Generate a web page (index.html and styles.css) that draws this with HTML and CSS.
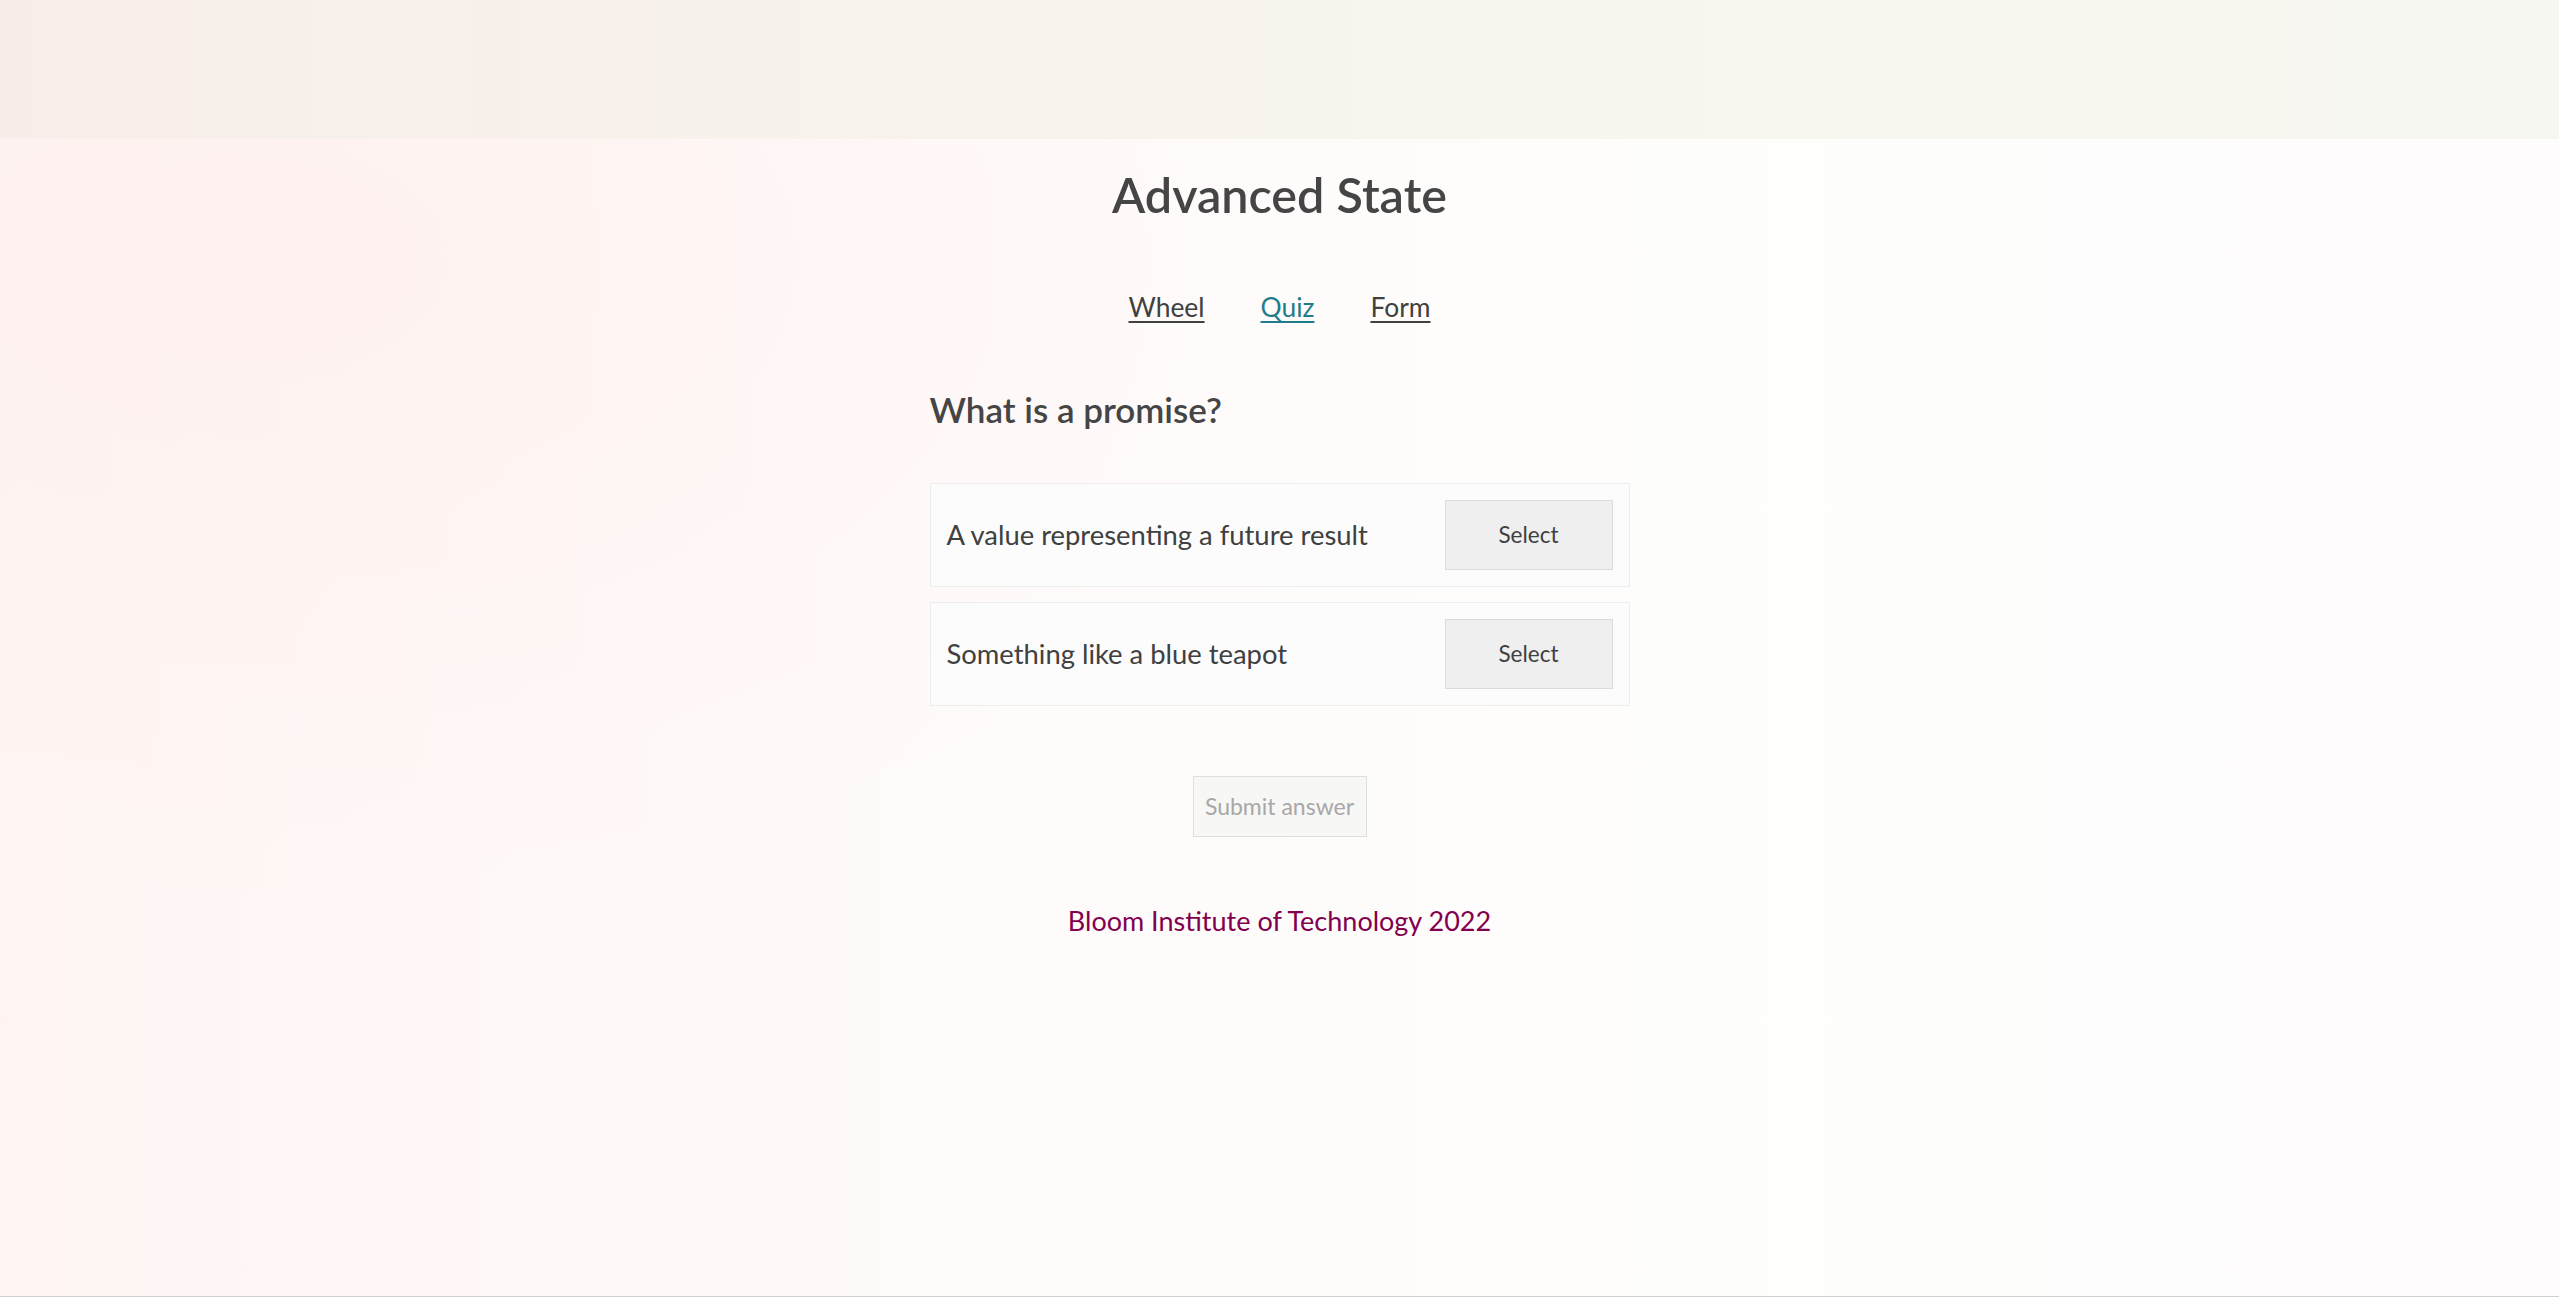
FILE: index.html
```html
<!DOCTYPE html>
<html lang="en">
<head>
<meta charset="utf-8">
<title>Advanced State</title>
<link rel="stylesheet" href="styles.css">
</head>
<body>
<div class="page">
  <header class="topbar"></header>
  <main class="main">
    <h1 class="title">Advanced State</h1>
    <nav class="nav">
      <a class="nav-link" href="#">Wheel</a>
      <a class="nav-link active" href="#">Quiz</a>
      <a class="nav-link" href="#">Form</a>
    </nav>
    <section class="quiz">
      <h2 class="question">What is a promise?</h2>
      <div class="answers">
        <div class="answer">
          <span class="answer-text">A value representing a future result</span>
          <button class="select-btn">Select</button>
        </div>
        <div class="answer">
          <span class="answer-text">Something like a blue teapot</span>
          <button class="select-btn">Select</button>
        </div>
      </div>
      <div class="submit-row">
        <button class="submit-btn" disabled>Submit answer</button>
      </div>
    </section>
    <footer class="footer">Bloom Institute of Technology 2022</footer>
  </main>
</div>
</body>
</html>
```
FILE: styles.css
```css
* { box-sizing: border-box; }

html, body {
  margin: 0;
  padding: 0;
}

body {
  font-family: "Lato", "Noto Sans", sans-serif;
  color: #444444;
  background:
    radial-gradient(ellipse 60% 70% at 10% 20%, rgba(255, 238, 236, 0.6), rgba(255, 238, 236, 0) 70%),
    linear-gradient(90deg, #fef5f3 0%, #fefbfa 40%, #fefefd 70%, #fefcfc 100%);
}

.page {
  min-height: 100vh;
  display: flex;
  flex-direction: column;
  border-bottom: 1px solid #cfcfcf;
}

.topbar {
  height: 139px;
  flex: none;
  background: linear-gradient(90deg, #f8eee9 0%, #f7f3ec 40%, #f7f6ef 70%, #f7f7f1 100%);
}

.main {
  display: flex;
  flex-direction: column;
  align-items: center;
}

.title {
  margin: 26px 0 0;
  font-size: 48.5px;
  line-height: 1.2;
  font-weight: 600;
  color: #454545;
}

.nav {
  margin-top: 69px;
  display: flex;
  gap: 56px;
}

.nav-link {
  font-size: 26.4px;
  line-height: 1.2;
  color: #404040;
  text-decoration: underline;
  text-underline-offset: 4px;
  text-decoration-thickness: 2px;
}

.nav-link.active {
  color: #1f7d8a;
}

.quiz {
  width: 700px;
  margin-top: 64px;
}

.question {
  margin: 0 0 53px;
  font-size: 35px;
  line-height: 1.2;
  font-weight: 600;
  color: #454545;
}

.answers {
  display: flex;
  flex-direction: column;
  gap: 15px;
}

.answer {
  display: flex;
  align-items: center;
  justify-content: space-between;
  padding: 16px;
  background: #fcfcfc;
  border: 1px solid #ededed;
}

.answer-text {
  font-size: 27.4px;
  line-height: 1.2;
  color: #404040;
  position: relative;
  top: 1px;
}

.select-btn {
  width: 168px;
  height: 70px;
  font-family: "Lato", "Noto Sans", sans-serif;
  font-size: 22.5px;
  line-height: 1.2;
  color: #404040;
  background: #efefef;
  border: 1px solid #dcdcdc;
  border-radius: 0;
  padding: 0;
}

.submit-row {
  margin-top: 70px;
  display: flex;
  justify-content: center;
}

.submit-btn {
  width: 174px;
  height: 61px;
  font-family: "Lato", "Noto Sans", sans-serif;
  font-size: 23px;
  line-height: 1.2;
  color: #a8a8a8;
  background: #f7f7f6;
  border: 1px solid #dedede;
  border-radius: 0;
  padding: 0;
}

.footer {
  margin-top: 68px;
  font-size: 27px;
  line-height: 1.2;
  color: #82004f;
}
```
